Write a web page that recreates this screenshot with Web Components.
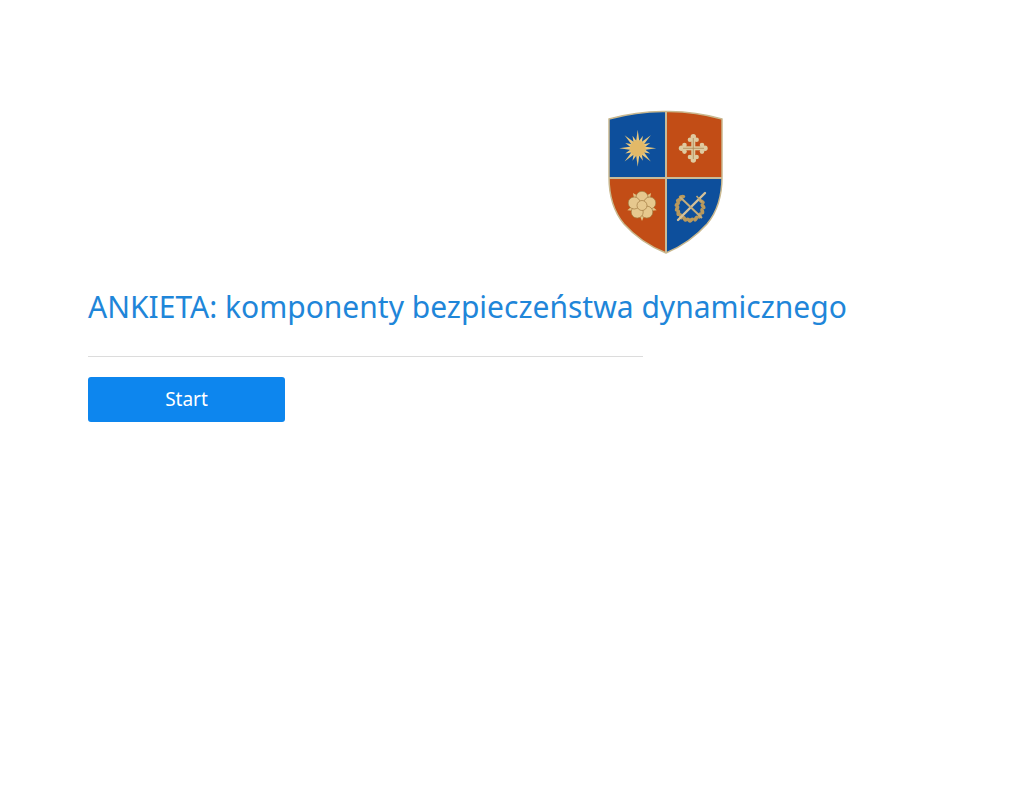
<!DOCTYPE html>
<html lang="pl">
<head>
<meta charset="utf-8">
<title>Ankieta</title>
<style>
html,body{margin:0;background:#fff}
body{font-family:"Noto Sans","Open Sans",sans-serif}
</style>
</head>
<body>
<survey-page>
  <crest-logo slot="logo"></crest-logo>
  <span slot="title">ANKIETA: komponenty bezpieczeństwa dynamicznego</span>
  <start-button slot="action">Start</start-button>
</survey-page>
<script>
class SurveyPage extends HTMLElement{
  constructor(){
    super();
    this.attachShadow({mode:'open'}).innerHTML=`<style>
      :host{display:block;height:790px;box-sizing:border-box;padding:105px 0 0 88px}
      .logo{display:flex;padding-left:512px}
      h1{margin:25px 0 0;font:400 30px/44px "Noto Sans","Open Sans",sans-serif;color:#1f86d9;white-space:nowrap}
      .rule{width:555px;height:1px;background:#dcdcdc;margin:27px 0 20px}
    </style>
    <div class="logo"><slot name="logo"></slot></div>
    <h1><slot name="title"></slot></h1>
    <div class="rule"></div>
    <slot name="action"></slot>`;
  }
}
class CrestLogo extends HTMLElement{
  constructor(){
    super();
    const f=n=>n.toFixed(1);
    let rays='';
    for(let i=0;i<16;i++){
      const a=i*Math.PI/8,l=i%2?13.5:18.5,w=.27;
      const p=(r,t)=>f(37.7+r*Math.cos(t))+','+f(43.3+r*Math.sin(t));
      rays+=`<polygon points="${p(6.5,a-w)} ${p(l,a)} ${p(6.5,a+w)}"/>`;
    }
    let petals='';
    for(let i=0;i<5;i++){
      const a=-Math.PI/2+i*2*Math.PI/5;
      petals+=`<circle cx="${f(42+8.2*Math.cos(a))}" cy="${f(100.5+8.2*Math.sin(a))}" r="6"/>`;
    }
    let sepals='';
    for(let i=0;i<5;i++){
      const a=-Math.PI/2+(i+.5)*2*Math.PI/5;
      const p=(r,t)=>f(42+r*Math.cos(t))+','+f(100.5+r*Math.sin(t));
      sepals+=`<polygon points="${p(9,a-.35)} ${p(15.5,a)} ${p(9,a+.35)}"/>`;
    }
    let leaves='';
    const arc=(from,to,n)=>{
      for(let i=0;i<n;i++){
        const c=(from+(to-from)*i/(n-1))*Math.PI/180;
        const x=90+13*Math.cos(c),y=102+13*Math.sin(c);
        const d=c*180/Math.PI+90+(to>from?30:-30);
        leaves+=`<ellipse cx="${f(x)}" cy="${f(y)}" rx="3.300" ry="1.900" transform="rotate(${d.toFixed(0)} ${f(x)} ${f(y)})"/>`;
      }
    };
    arc(95,232,8);
    arc(85,-25,6);
    const shield='M9 14Q38 6 66 6.500Q94 6 122 14L122 72Q122 101 107 119Q90 138 66 148Q41 138 24 119Q9 101 9 72Z';
    this.attachShadow({mode:'open'}).innerHTML=`<style>
      :host{display:block;width:130px;height:155px}
      svg{display:block;width:130px;height:155px}
    </style>
    <svg viewBox="0 0 130 155" role="img" aria-label="Herb">
      <defs>
        <clipPath id="s"><path d="${shield}"/></clipPath>
        <filter id="b" x="-5%" y="-5%" width="110%" height="110%"><feGaussianBlur stdDeviation=".5"/></filter>
      </defs>
      <g filter="url(#b)">
        <g clip-path="url(#s)">
          <rect x="0" y="0" width="66" height="73" fill="#0c4f9c"/>
          <rect x="66" y="0" width="66" height="73" fill="#c24d12"/>
          <rect x="0" y="73" width="66" height="80" fill="#c24d12"/>
          <rect x="66" y="73" width="66" height="80" fill="#0c4f9c"/>
          <path d="M66 0V155M0 73H132" stroke="#c9bb98" stroke-width="2"/>
        </g>
        <path d="${shield}" fill="none" stroke="#c9b88f" stroke-width="1.500"/>
        <g fill="#e8c77e">${rays}<circle cx="37.700" cy="43.300" r="8" fill="#e2b968"/></g>
        <g fill="#dfcaa0">
          <rect x="91.300" y="31" width="4" height="25"/>
          <rect x="81" y="41.300" width="25" height="4"/>
          <circle cx="93.300" cy="31.800" r="2.700"/><circle cx="90" cy="34.800" r="2.300"/><circle cx="96.600" cy="34.800" r="2.300"/>
          <circle cx="93.300" cy="55" r="2.700"/><circle cx="90" cy="52" r="2.300"/><circle cx="96.600" cy="52" r="2.300"/>
          <circle cx="81.500" cy="43.300" r="2.700"/><circle cx="84.500" cy="40" r="2.300"/><circle cx="84.500" cy="46.600" r="2.300"/>
          <circle cx="105" cy="43.300" r="2.700"/><circle cx="102" cy="40" r="2.300"/><circle cx="102" cy="46.600" r="2.300"/>
          <path d="M93.300 33V54M83 43.300H104" stroke="#a8814c" stroke-width=".7"/>
        </g>
        <g fill="#e2c184">${sepals}</g>
        <g fill="#e6c88e" stroke="#a07a42" stroke-width=".7">${petals}<circle cx="42" cy="100.500" r="5"/></g>
        <g>
          <g fill="#b9995c">${leaves}</g>
          <path d="M78 115L105 88" stroke="#d4c19a" stroke-width="2.400" stroke-linecap="round"/>
          <path d="M80 92L102 113" stroke="#c4ad7c" stroke-width="2"/>
          <path d="M96.500 91L102 97" stroke="#c2a972" stroke-width="1.600"/>
        </g>
      </g>
    </svg>`;
  }
}
class StartButton extends HTMLElement{
  constructor(){
    super();
    this.attachShadow({mode:'open'}).innerHTML=`<style>
      :host{display:block;width:197px}
      button{display:block;width:100%;height:45px;padding:0 0 1px;border:0;border-radius:3px;background:#0d86ee;color:#fff;font:400 19px/44px "Noto Sans","Open Sans",sans-serif;cursor:pointer}
    </style><button type="button"><slot></slot></button>`;
  }
}
customElements.define('survey-page',SurveyPage);
customElements.define('crest-logo',CrestLogo);
customElements.define('start-button',StartButton);
</script>
</body>
</html>
